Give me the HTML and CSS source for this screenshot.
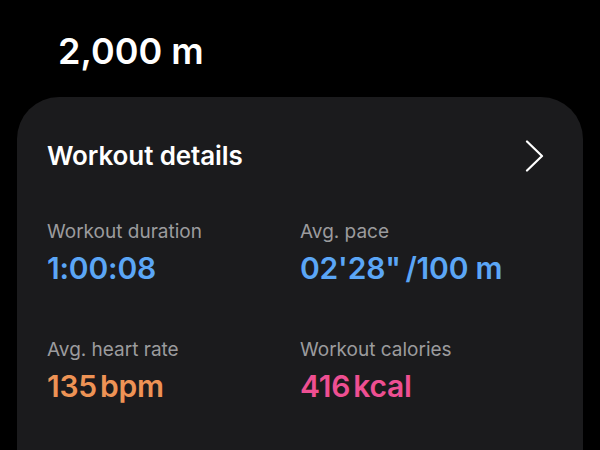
FILE: index.html
```html
<!DOCTYPE html>
<html>
<head>
<meta charset="utf-8">
<link rel="stylesheet" href="styles.css">
</head>
<body>
<div class="page">
  <div class="distance">2,000 m</div>
  <section class="card">
    <div class="card-head">
      <div class="title">Workout details</div>
      <svg class="chev" width="20" height="32" viewBox="0 0 20 32"><path d="M2 1.5 L17 16 L2 30.5" fill="none" stroke="#fff" stroke-width="2.2" stroke-linecap="round" stroke-linejoin="round"/></svg>
    </div>
    <div class="grid">
      <div class="stat">
        <div class="label">Workout duration</div>
        <div class="value blue">1:00:08</div>
      </div>
      <div class="stat">
        <div class="label">Avg. pace</div>
        <div class="value blue">02'28"&thinsp;/100 m</div>
      </div>
      <div class="stat">
        <div class="label">Avg. heart rate</div>
        <div class="value orange">135<span class="unit">bpm</span></div>
      </div>
      <div class="stat">
        <div class="label">Workout calories</div>
        <div class="value pink">416<span class="unit">kcal</span></div>
      </div>
    </div>
  </section>
</div>
</body>
</html>
```

FILE: styles.css
```css
html, body {
  margin: 0;
  padding: 0;
  background: #000;
}
body {
  width: 600px;
  height: 450px;
  overflow: hidden;
  font-family: Inter, "Noto Sans", sans-serif;
  color: #fff;
}
.page {
  padding: 0 17px;
}
.distance {
  padding: 29px 0 0 41px;
  height: 97px;
  box-sizing: border-box;
  font-size: 36px;
  font-weight: 600;
  line-height: 44px;
}
.card {
  background: #1b1b1d;
  border-radius: 42px 42px 0 0;
  height: 353px;
  padding: 43px 30px 0;
  box-sizing: border-box;
}
.card-head {
  display: flex;
  justify-content: space-between;
  align-items: center;
  height: 32px;
}
.title {
  font-size: 26px;
  font-weight: 600;
  line-height: 32px;
  letter-spacing: -0.1px;
}
.chev {
  margin-right: 8px;
}
.grid {
  display: grid;
  grid-template-columns: 253px 1fr;
  row-gap: 52px;
  margin-top: 48px;
}
.label {
  font-size: 19px;
  color: #9b9b9e;
  line-height: 24px;
}
.value {
  font-size: 30px;
  font-weight: 600;
  line-height: 36px;
  margin-top: 6px;
  letter-spacing: -0.2px;
}
.unit {
  margin-left: 3px;
}
.blue { color: #5ba6f6; }
.orange { color: #ee9355; }
.pink { color: #ee4f92; }
```
